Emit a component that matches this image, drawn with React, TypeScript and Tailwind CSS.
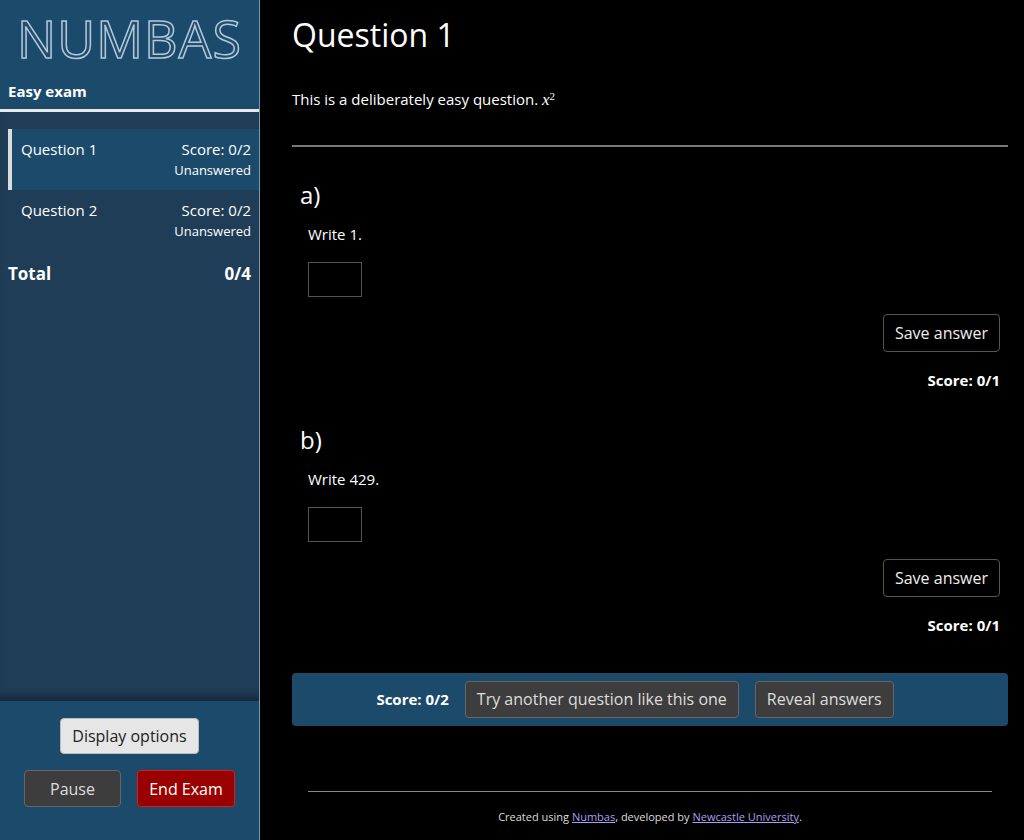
const font = { fontFamily: '"Open Sans", "Noto Sans", sans-serif' };

const Part = ({ label, prompt }: { label: string; prompt: string }) => (
  <div className="px-2 pt-[30px]">
    <div className="text-[24px] leading-[36px]">{label}</div>
    <p className="mt-[10px] pl-2 text-[15px]">{prompt}</p>
    <div className="ml-2 mt-[17px] h-[35px] w-[54px] border border-[#555]" />
    <div className="mt-[17px] flex justify-end">
      <button className="rounded border border-[#555] px-[11px] py-[6px] text-[16px] text-[#eee]">
        Save answer
      </button>
    </div>
    <div className="mt-[17px] text-right text-[15px] font-bold">Score: 0/1</div>
  </div>
);

export default function App() {
  return (
    <div style={font} className="flex h-[840px] w-[1024px] bg-black text-white">
      {/* Sidebar */}
      <aside className="flex w-[260px] shrink-0 flex-col border-r border-[#6f9cc0] bg-[#1f3d56]">
        <div className="bg-[#1c4a6b]">
          <div className="flex h-[75px] items-center justify-center">
            <span className="text-[52px] font-normal leading-none tracking-[1px] text-[#2c4a62] [-webkit-text-stroke:1.5px_#a8cbe6]">
              NUMBAS
            </span>
          </div>
          <div className="px-2 pb-[6px] pt-[5px] text-[15px] font-bold">Easy exam</div>
          <div className="h-[3px] bg-[#e8e8e8]" />
        </div>
        <div className="flex-1 pt-[17px] shadow-[inset_0_-12px_10px_-8px_rgba(0,0,0,0.4)]">
          <div className="ml-2 flex h-[61px] justify-between border-l-4 border-[#ddd] bg-[#1c4a6b] pl-[9px] pr-2 pt-[9px]">
            <span className="text-[15px]">Question 1</span>
            <div className="text-right">
              <div className="text-[15px] leading-[22px]">Score: 0/2</div>
              <div className="text-[13px] leading-[20px]">Unanswered</div>
            </div>
          </div>
          <div className="ml-2 flex h-[61px] justify-between pl-[13px] pr-2 pt-[9px]">
            <span className="text-[15px]">Question 2</span>
            <div className="text-right">
              <div className="text-[15px] leading-[22px]">Score: 0/2</div>
              <div className="text-[13px] leading-[20px]">Unanswered</div>
            </div>
          </div>
          <div className="flex justify-between px-2 pt-[10px] text-[17px] font-bold">
            <span>Total</span>
            <span>0/4</span>
          </div>
        </div>
        <div className="flex h-[139px] flex-col items-center bg-[#1c4a6b] pt-[17px]">
          <button className="rounded border border-[#bbb] bg-[#e6e6e6] px-[11px] py-[5px] text-[16px] text-[#222]">
            Display options
          </button>
          <div className="mt-[16px] flex gap-[16px]">
            <button className="h-[37px] w-[97px] rounded border border-[#666] bg-[#3d3d3d] text-[16px] text-[#ddd]">
              Pause
            </button>
            <button className="h-[37px] w-[98px] rounded border border-[#d02020] bg-[#990000] text-[16px]">
              End Exam
            </button>
          </div>
        </div>
      </aside>

      {/* Main */}
      <main className="flex-1 pl-[32px] pr-[16px]">
        <h1 className="pt-[14px] text-[32px] leading-[42px]">Question 1</h1>
        <p className="mt-[31px] text-[15px]">
          This is a deliberately easy question.{" "}
          <span style={{ fontFamily: '"Liberation Serif", serif' }} className="text-[17px] italic">
            x<sup className="text-[11px] not-italic">2</sup>
          </span>
        </p>
        <hr className="mt-[32px] border-t-2 border-[#777]" />
        <Part label="a)" prompt="Write 1." />
        <Part label="b)" prompt="Write 429." />
        <div className="mt-[36px] flex h-[53px] items-center justify-center gap-[16px] rounded bg-[#1c4a6b] pr-[30px]">
          <span className="text-[15px] font-bold">Score: 0/2</span>
          <button className="h-[37px] rounded border border-[#666] bg-[#3d3d3d] px-[11px] text-[16px] text-[#ddd]">
            Try another question like this one
          </button>
          <button className="h-[37px] rounded border border-[#666] bg-[#3d3d3d] px-[11px] text-[16px] text-[#ddd]">
            Reveal answers
          </button>
        </div>
        <div className="mx-[16px] mt-[65px] border-t border-[#888]" />
        <p className="mt-[17px] text-center text-[11px] text-[#ddd]">
          Created using <span className="text-[#a99ff0] underline">Numbas</span>, developed by{" "}
          <span className="text-[#a99ff0] underline">Newcastle University</span>.
        </p>
      </main>
    </div>
  );
}
